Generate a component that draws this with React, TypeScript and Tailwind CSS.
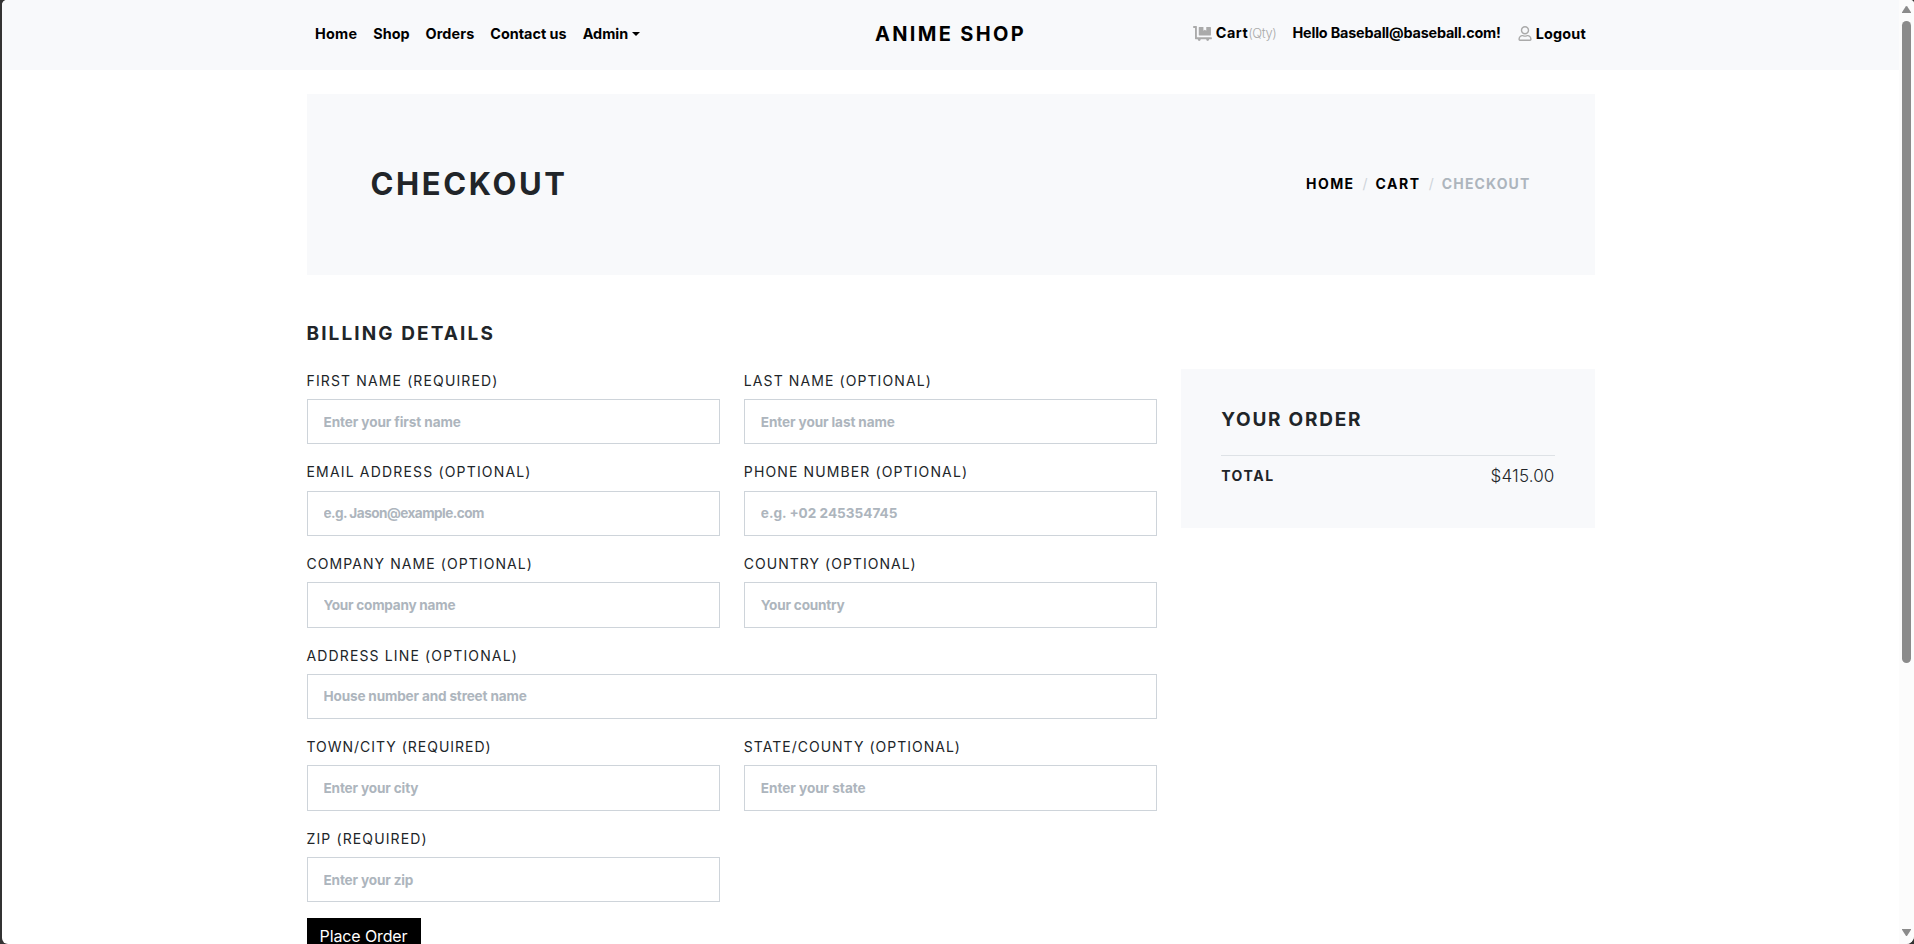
import clsx from "clsx";
import { FaDollyFlatbed, FaRegUser } from "react-icons/fa";

type FieldProps = {
  id: string;
  label: string;
  labelClass: string;
  placeholder: string;
  inputClass: string;
  wide?: boolean;
};

const fields: FieldProps[] = [
  { id: "first", label: "First name (required)", labelClass: "tracking-[1.13px]", placeholder: "Enter your first name", inputClass: "tracking-[-0.1px]" },
  { id: "last", label: "Last name (optional)", labelClass: "tracking-[1.09px]", placeholder: "Enter your last name", inputClass: "tracking-[-0.11px]" },
  { id: "email", label: "Email address (optional)", labelClass: "tracking-[1.17px]", placeholder: "e.g. Jason@example.com", inputClass: "tracking-[-0.54px]" },
  { id: "phone", label: "Phone number (optional)", labelClass: "tracking-[1.12px]", placeholder: "e.g. +02 245354745", inputClass: "tracking-[0px]" },
  { id: "company", label: "Company name (optional)", labelClass: "tracking-[1.07px]", placeholder: "Your company name", inputClass: "tracking-[-0.24px]" },
  { id: "country", label: "Country (optional)", labelClass: "tracking-[1.02px]", placeholder: "Your country", inputClass: "tracking-[-0.2px]" },
  { id: "address", label: "Address line (optional)", labelClass: "tracking-[1.14px]", placeholder: "House number and street name", inputClass: "tracking-[-0.17px]", wide: true },
  { id: "city", label: "Town/City (required)", labelClass: "tracking-[0.98px]", placeholder: "Enter your city", inputClass: "tracking-[-0.15px]" },
  { id: "state", label: "State/County (optional)", labelClass: "tracking-[1.01px]", placeholder: "Enter your state", inputClass: "tracking-[-0.04px]" },
  { id: "zip", label: "Zip (required)", labelClass: "tracking-[1.12px]", placeholder: "Enter your zip", inputClass: "tracking-[-0.16px]" },
];

function Field({ id, label, labelClass, placeholder, inputClass, wide }: FieldProps) {
  return (
    <div className={clsx(wide && "col-span-2")}>
      <label htmlFor={id} className={clsx("block h-[30.2px] text-[14px] leading-[24.4px] uppercase", labelClass)}>
        {label}
      </label>
      <input
        id={id}
        placeholder={placeholder}
        className={clsx(
          "block h-[45.4px] w-full border border-[#ced4da] bg-white px-4 text-[13.6px] font-bold outline-none placeholder:text-[#adb5bd]",
          inputClass,
        )}
      />
    </div>
  );
}

function Header() {
  return (
    <header className="h-[70px] bg-[#f8f9fb] pl-px">
      <nav className="mx-auto flex h-[67px] w-[1288px] items-center pr-[9px] pl-2 text-[14.4px] leading-6 font-bold text-black">
        <div className="flex w-[560px] gap-4">
          <a href="#" className="tracking-[0.25px]">Home</a>
          <a href="#">Shop</a>
          <a href="#" className="tracking-[0.1px]">Orders</a>
          <a href="#">Contact us</a>
          <a href="#" className="flex items-center gap-1">
            Admin
            <svg viewBox="0 0 8 4" className="h-1 w-2"><path d="M0 0h8L4 4z" /></svg>
          </a>
        </div>
        <a href="#" className="grow text-[20px] tracking-[2.32px]">ANIME SHOP</a>
        <div className="flex gap-4">
          <a href="#" className="flex items-center pb-px">
            <FaDollyFlatbed className="mr-1 h-[15px] w-[19px] text-[#aaa]" />
            <span className="tracking-[0.5px]">Cart</span>
            <span className="text-[13px] font-light tracking-[-0.4px] text-[#aaa]">(Qty)</span>
          </a>
          <a href="#" className="mr-px pb-px tracking-[-0.19px]">Hello Baseball@baseball.com!</a>
          <a href="#" className="flex items-center">
            <FaRegUser className="mr-1 h-[15px] w-[14px] text-[#aaa]" />
            <span className="tracking-[0.2px]">Logout</span>
          </a>
        </div>
      </nav>
    </header>
  );
}

function Hero() {
  return (
    <section className="mt-6 flex h-[181px] items-center justify-between bg-[#f8f9fb] px-16">
      <h1 className="pb-px text-[31px] leading-9 font-bold tracking-[2.6px]">CHECKOUT</h1>
      <ol className="flex pb-0.5 text-[14px] leading-6 font-bold text-black">
        <li className="tracking-[1.4px]">HOME</li>
        <li className="mx-2 font-normal text-[#ced4da]">/</li>
        <li className="tracking-[1.56px]">CART</li>
        <li className="mx-2 font-normal text-[#ced4da]">/</li>
        <li className="tracking-[1.14px] text-[#adb5bd]">CHECKOUT</li>
      </ol>
    </section>
  );
}

function OrderSummary() {
  return (
    <aside className="h-[159px] bg-[#f8f9fb] px-10 pt-[41px]">
      <h2 className="mb-[25px] text-[19px] leading-5 font-bold tracking-[1.76px]">YOUR ORDER</h2>
      <div className="flex justify-between border-t border-[#dee2e6] pt-2 leading-6">
        <strong className="text-[14px] font-bold tracking-[1.55px]">TOTAL</strong>
        <span className="text-[17px] font-light tracking-[0.15px]">$415.00</span>
      </div>
    </aside>
  );
}

function ScrollBar() {
  return (
    <div className="flex w-[15px] shrink-0 flex-col items-center bg-[#fcfcfc] pt-1.5 pb-2 pr-px">
      <svg viewBox="0 0 9 7" className="h-[7px] w-[9px] fill-[#8b8b8b]"><path d="M3.7.6Q4.5-.4 5.3.6L9 6.2V7H0v-.8z" /></svg>
      <div className="mt-2 h-[642px] w-[9px] rounded-full bg-[#8b8b8b]" />
      <svg viewBox="0 0 9 7" className="mt-auto h-[7px] w-[9px] fill-[#8b8b8b]"><path d="M3.7 6.4q.8 1 1.6 0L9 .8V0H0v.8z" /></svg>
    </div>
  );
}

export default function App() {
  return (
    <div className="h-[944px] overflow-hidden bg-[#333] pl-0.5 font-['Inter',sans-serif] text-[#212529]">
      <div className="flex h-full overflow-hidden rounded-tl-[5px] rounded-tr-[4px] rounded-br-[8px] rounded-bl-[6px] bg-white">
        <div className="grow overflow-hidden">
          <Header />
          <main className="mx-auto w-[1288px]">
            <Hero />
            <h2 className="mt-[47px] mb-[22.8px] text-[19px] leading-6 font-bold tracking-[2.1px]">BILLING DETAILS</h2>
            <div className="grid grid-cols-3 items-start gap-x-6">
              <form className="col-span-2">
                <div className="grid grid-cols-2 gap-x-6 gap-y-4">
                  {fields.map((f) => <Field key={f.id} {...f} />)}
                </div>
                <button type="button" className="mt-4 h-[38px] w-[114px] bg-black pb-0.5 text-[16px] tracking-[-0.12px] text-white">
                  Place Order
                </button>
              </form>
              <OrderSummary />
            </div>
          </main>
        </div>
        <ScrollBar />
      </div>
    </div>
  );
}
